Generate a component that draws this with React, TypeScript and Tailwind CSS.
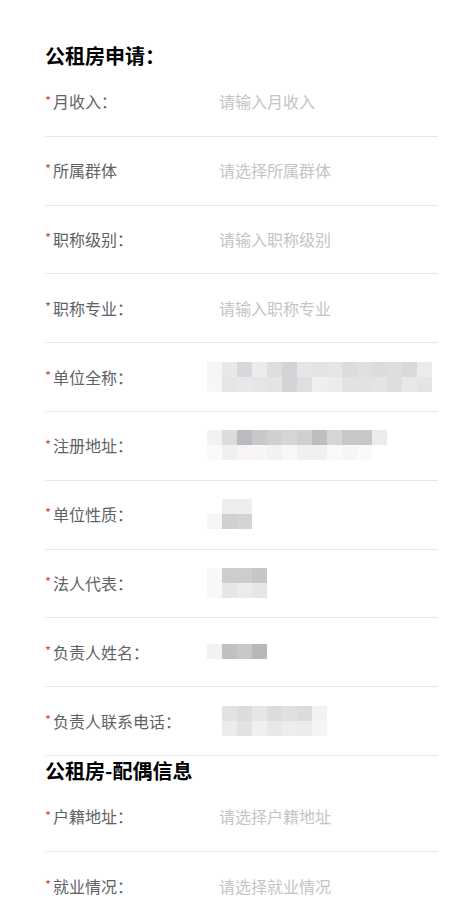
import React from "react";

type Mosaic = { left: number; cell: number; rows: string[][] };

type Field = {
  label: string;
  placeholder?: string;
  mosaic?: Mosaic;
};

const applyFields: Field[] = [
  { label: "月收入：", placeholder: "请输入月收入" },
  { label: "所属群体", placeholder: "请选择所属群体" },
  { label: "职称级别：", placeholder: "请输入职称级别" },
  { label: "职称专业：", placeholder: "请输入职称专业" },
  {
    label: "单位全称：",
    mosaic: {
      left: 207,
      cell: 15,
      rows: [
        ["#f5f5f5", "#e8e8e8", "#d5d8dc", "#ececec", "#dedede", "#d4d4d6", "#e6e6e8", "#e3e3e3", "#e6e6e6", "#dcdcdc", "#e0e0e0", "#dcdcdc", "#dedede", "#d9d9d9", "#ececec"],
        ["#f7f7f7", "#e5e5e5", "#e8e8ea", "#e6e6e6", "#e4e4e4", "#d4d4d6", "#dedee3", "#efeff2", "#ececec", "#e2e2e2", "#e2e2e2", "#e4e4e4", "#dedede", "#e8e8e8", "#e4e4e4"],
      ],
    },
  },
  {
    label: "注册地址：",
    mosaic: {
      left: 207,
      cell: 15,
      rows: [
        ["#f2f2f2", "#dcdcdc", "#b8bcc2", "#c8c8ca", "#d0d0d0", "#d6d6d6", "#d0d0d2", "#bebebe", "#d6d6d6", "#c8c8c8", "#c8c8c8", "#ececec"],
        ["#fafafa", "#f0f0f0", "#f8f4f4", "#f6f6f6", "#f2f2f2", "#f8f8f8", "#f0f0f2", "#f0f0f0", "#fafafa", "#f6f6f6", "#fafafa", "#ffffff"],
      ],
    },
  },
  {
    label: "单位性质：",
    mosaic: {
      left: 207,
      cell: 15,
      rows: [
        ["#ffffff", "#eeeeee", "#eeeeee"],
        ["#f8f6f4", "#d0d0d0", "#d4d4d4"],
      ],
    },
  },
  {
    label: "法人代表：",
    mosaic: {
      left: 207,
      cell: 15,
      rows: [
        ["#f8f8f8", "#cdcdcd", "#cdcdcd", "#c6c6c6"],
        ["#f8f8f8", "#e6e6e6", "#ececec", "#e6e6e6"],
      ],
    },
  },
  {
    label: "负责人姓名：",
    mosaic: {
      left: 207,
      cell: 15,
      rows: [["#f2f2f2", "#c0c0c0", "#c8c8c8", "#b8b8b8"]],
    },
  },
  {
    label: "负责人联系电话：",
    mosaic: {
      left: 222,
      cell: 15,
      rows: [
        ["#e2e2e2", "#dcdcdc", "#e6e6e6", "#dcdcdc", "#e0e0e0", "#dcdcdc", "#f2f2f2"],
        ["#ececec", "#e2e2e2", "#f0f0f0", "#e8e8e8", "#eeeeee", "#ececec", "#f4f4f4"],
      ],
    },
  },
];

const spouseFields: Field[] = [
  { label: "户籍地址：", placeholder: "请选择户籍地址" },
  { label: "就业情况：", placeholder: "请选择就业情况" },
];

const MosaicBlock = ({ mosaic }: { mosaic: Mosaic }) => (
  <div className="flex flex-col" style={{ marginLeft: mosaic.left - 45 - 174 }}>
    {mosaic.rows.map((row, i) => (
      <div key={i} className="flex">
        {row.map((c, j) => (
          <div key={j} style={{ width: mosaic.cell, height: mosaic.cell, background: c }} />
        ))}
      </div>
    ))}
  </div>
);

const FieldRow = ({ field, last }: { field: Field; last?: boolean }) => (
  <div
    className={`flex h-[68.8px] items-center pb-[1px] ${last ? "" : "border-b border-[#e8e8e8]"}`}
  >
    <div className="flex w-[174px] shrink-0 items-center text-[16px] text-[#606266]">
      <span className="relative -top-[1px] w-[8px] text-[13px] text-[#c9533f]">*</span>
      <span>{field.label}</span>
    </div>
    {field.placeholder && (
      <span className="text-[16px] text-[#c4c4c4]">{field.placeholder}</span>
    )}
    {field.mosaic && <MosaicBlock mosaic={field.mosaic} />}
  </div>
);

export default function App() {
  return (
    <div
      className="min-h-[910px] w-[470px] bg-white px-[45px] pt-[44px]"
      style={{ fontFamily: '"Noto Sans CJK SC", "Noto Sans", sans-serif' }}
    >
      <h2 className="h-[24px] text-[20px] font-bold leading-[24px] text-black">公租房申请：</h2>
      <div className="w-[393px]">
        {applyFields.map((f) => (
          <FieldRow key={f.label} field={f} />
        ))}
      </div>
      <h2 className="mt-[3px] h-[24px] text-[20px] font-bold leading-[24px] text-black">公租房-配偶信息</h2>
      <div className="w-[393px]">
        {spouseFields.map((f, i) => (
          <FieldRow key={f.label} field={f} last={i === spouseFields.length - 1} />
        ))}
      </div>
    </div>
  );
}
